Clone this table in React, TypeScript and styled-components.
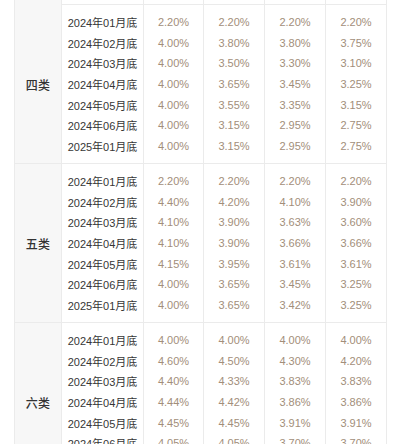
import { createGlobalStyle } from "styled-components";
import styled from "styled-components";

// 页面基础样式
const GlobalStyle = createGlobalStyle`
  html, body {
    margin: 0;
    padding: 0;
    background: #ffffff;
    overflow: hidden;
  }
  body {
    font-family: "Liberation Sans", "Noto Sans CJK SC", sans-serif;
  }
`;

const COLS = "47px 82px 60px 61px 61px 1fr";
const ROW_H = 20.67;

// 表格外框
const Table = styled.div`
  margin: 0 13px 0 14px;
  border-left: 1px solid #ebebeb;
  border-right: 1px solid #ebebeb;
`;

// 每个分类的一组行
const Group = styled.div<{ $h: number }>`
  display: grid;
  grid-template-columns: ${COLS};
  height: ${(p) => p.$h}px;
  border-bottom: 1px solid #ebebeb;
`;

// 左侧分类名
const CategoryCell = styled.div`
  display: flex;
  align-items: center;
  justify-content: center;
  background: #f7f7f7;
  border-right: 1px solid #ebebeb;
  color: #333333;
  font-size: 12px;
  font-weight: 500;
  letter-spacing: 0.2px;
`;

// 一列数值
const Column = styled.div`
  display: flex;
  flex-direction: column;
  padding: 6.65px 0;
  border-right: 1px solid #ebebeb;
  &:last-child {
    border-right: none;
  }
`;

const Value = styled.div<{ $kind: "date" | "rate" }>`
  height: ${ROW_H}px;
  display: flex;
  align-items: center;
  justify-content: center;
  font-size: 11px;
  white-space: nowrap;
  color: ${(p) => (p.$kind === "date" ? "#363636" : "#a28e7a")};
`;

type Row = [string, string, string, string, string];

const DATES = [
  "2024年01月底",
  "2024年02月底",
  "2024年03月底",
  "2024年04月底",
  "2024年05月底",
  "2024年06月底",
  "2025年01月底",
];

const build = (rates: string[][]): Row[] =>
  rates.map((r, i) => [DATES[i], ...r.map((v) => `${v}%`)] as Row);

const groups: { name: string; rows: Row[] }[] = [
  {
    name: "四类",
    rows: build([
      ["2.20", "2.20", "2.20", "2.20"],
      ["4.00", "3.80", "3.80", "3.75"],
      ["4.00", "3.50", "3.30", "3.10"],
      ["4.00", "3.65", "3.45", "3.25"],
      ["4.00", "3.55", "3.35", "3.15"],
      ["4.00", "3.15", "2.95", "2.75"],
      ["4.00", "3.15", "2.95", "2.75"],
    ]),
  },
  {
    name: "五类",
    rows: build([
      ["2.20", "2.20", "2.20", "2.20"],
      ["4.40", "4.20", "4.10", "3.90"],
      ["4.10", "3.90", "3.63", "3.60"],
      ["4.10", "3.90", "3.66", "3.66"],
      ["4.15", "3.95", "3.61", "3.61"],
      ["4.00", "3.65", "3.45", "3.25"],
      ["4.00", "3.65", "3.42", "3.25"],
    ]),
  },
  {
    name: "六类",
    rows: build([
      ["4.00", "4.00", "4.00", "4.00"],
      ["4.60", "4.50", "4.30", "4.20"],
      ["4.40", "4.33", "3.83", "3.83"],
      ["4.44", "4.42", "3.86", "3.86"],
      ["4.45", "4.45", "3.91", "3.91"],
      ["4.05", "4.05", "3.70", "3.70"],
      ["4.05", "4.05", "3.70", "3.70"],
    ]),
  },
];

const RateGroup = ({ name, rows }: { name: string; rows: Row[] }) => (
  <Group $h={158}>
    <CategoryCell>{name}</CategoryCell>
    {[0, 1, 2, 3, 4].map((c) => (
      <Column key={c}>
        {rows.map((r, i) => (
          <Value key={i} $kind={c === 0 ? "date" : "rate"}>
            {r[c]}
          </Value>
        ))}
      </Column>
    ))}
  </Group>
);

export default function App() {
  return (
    <>
      <GlobalStyle />
      <Table>
        {/* 上一组的残留部分 */}
        <Group $h={4}>
          <CategoryCell />
          <Column />
          <Column />
          <Column />
          <Column />
          <Column />
        </Group>
        {groups.map((g) => (
          <RateGroup key={g.name} name={g.name} rows={g.rows} />
        ))}
      </Table>
    </>
  );
}
